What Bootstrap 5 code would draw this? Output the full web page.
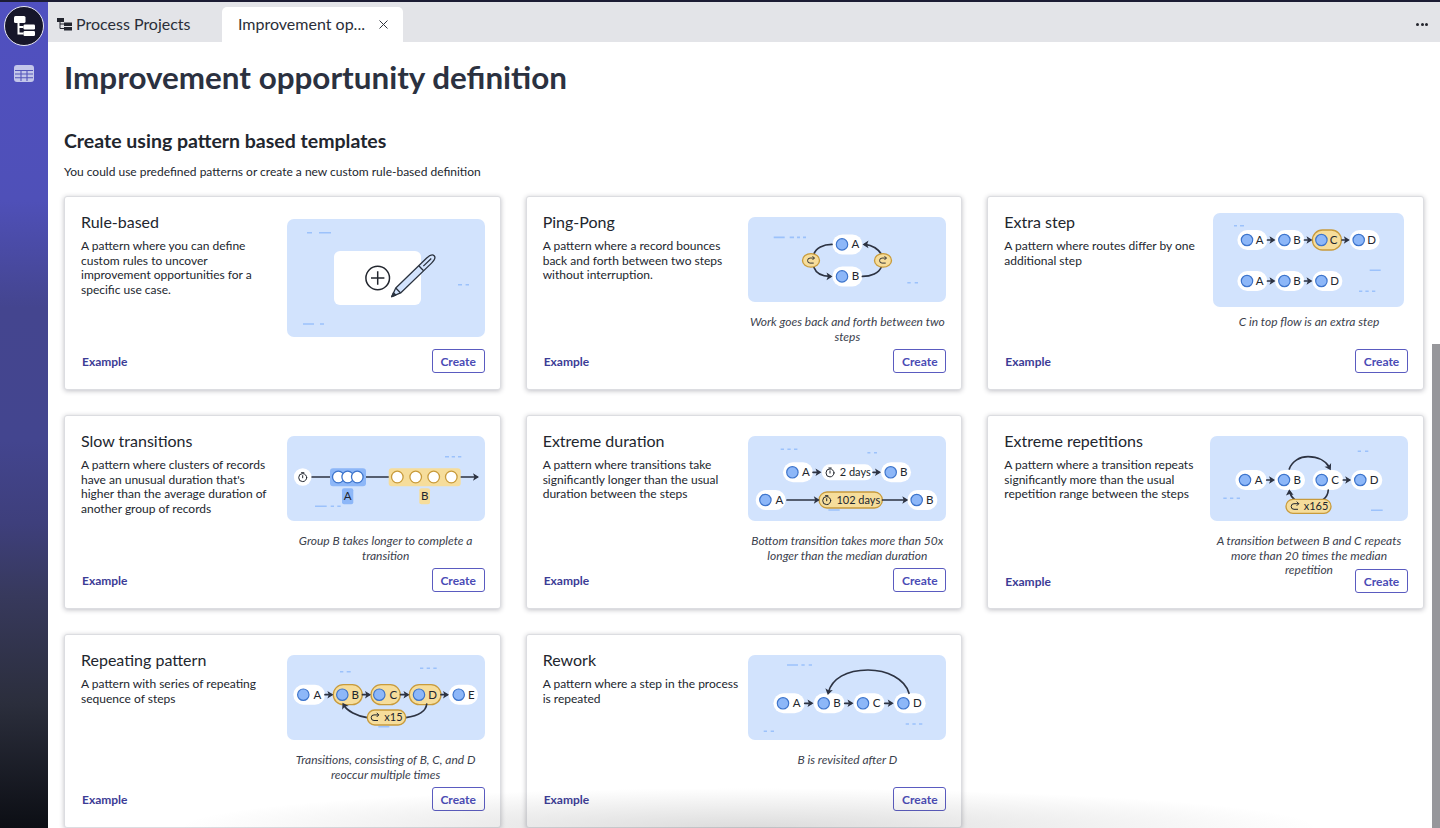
<!DOCTYPE html>
<html lang="en">
<head>
<meta charset="utf-8">
<title>Improvement opportunity definition</title>
<link href="https://cdn.jsdelivr.net/npm/bootstrap@5.3.0/dist/css/bootstrap.min.css" rel="stylesheet">
<style>
html,body{height:100%;overflow:hidden;}
body{font-family:"Lato","Liberation Sans",sans-serif;background:#fff;color:#22262e;}
.topline{height:2px;background:#1c1c34;}
.shell{height:826px;}
.rail{width:48px;flex:none;background:linear-gradient(180deg,#5050c0 0%,#4f50b8 24%,#44458f 37%,#43458f 53%,#3e3f7c 63%,#37395c 72%,#2b2e3c 85%,#0c0e14 100%);padding-top:4px;}
.logo{width:40px;height:40px;border-radius:50%;background:#16162a;border:1.5px solid #e8e8f4;}
.rail-icon{margin-top:19px;}
.tabbar{height:40px;background:#e3e4e8;padding-right:12px;}
.tab-a{font-size:16px;color:#2a2e38;padding:4px 0 0 9px;width:174px;gap:4px;}
.tab-b{font-size:16px;color:#2a2e38;background:#fff;width:181px;height:35px;margin-top:5px;border-radius:5px 5px 0 0;padding:0 15px 1px 16px;}
.dots{gap:1.5px;padding-top:4px;}
.dots i{display:block;width:3px;height:3px;border-radius:50%;background:#23242c;}
.page{padding:0 16px 0 16px;overflow:hidden;}
.page-title{font-size:31.4px;font-weight:700;color:#2b3140;margin:18px 0 0;line-height:34px;}
.sect-title{font-size:19.5px;font-weight:700;color:#22262e;margin:34px 0 0;line-height:26px;}
.sect-sub{font-size:12px;color:#22262e;margin:9px 0 0;line-height:18px;}
.tpl-grid{display:grid;grid-template-columns:repeat(3,1fr);grid-auto-rows:194px;gap:25px;margin-top:15px;}
.tpl{background:#fff;border:1px solid #dcdde1;border-radius:3px;box-shadow:0 1px 5px rgba(30,30,50,.28);padding:16px 15px 16px 16px;}
.tpl-main{flex:1 1 auto;min-height:0;gap:8px;}
.tpl-copy{flex:1 1 0;min-width:0;}
.tpl-name{font-size:16px;font-weight:400;color:#22262e;margin:-1px 0 0;line-height:20px;}
.tpl-desc{font-size:12px;line-height:14.5px;color:#22262e;margin:7px 0 0;}
.tpl-side{width:198px;flex:none;}
.pic{display:block;background:#d2e3fd;border-radius:7px;}
.w198{width:198px;height:85px;margin-top:4px;}
.tpl-first .pic{height:118px;margin-top:6px;}
.tpl-third .pic{width:191px;height:94px;margin:0 auto;}
.cap{font-size:12px;font-style:italic;line-height:14.5px;color:#3b414d;text-align:center;margin:13px 0 0;}
.cap-tight{margin-top:8px;}
.tpl-foot{margin-top:auto;padding-left:1px;}
.foot-low{margin-bottom:-1px;}
.ex-link{font-size:12px;font-weight:700;color:#3c3c96;text-decoration:none;margin-top:2px;}
.mk-btn{font-size:12px;font-weight:700;color:#4a4bb5;background:#fff;border:1.3px solid #5a5bc0;border-radius:3px;padding:0;width:53px;height:24px;line-height:21px;}
.scroll-thumb{position:absolute;right:0;top:342px;bottom:0;width:8px;background:#97979b;}
.fade-b{position:absolute;left:130px;right:120px;bottom:0;height:40px;pointer-events:none;background:radial-gradient(50% 100% at 50% 100%,rgba(60,60,60,.18),rgba(60,60,60,0) 100%);}
.dsh{stroke:#9cc2fb;stroke-width:1.6;fill:none;}
.lbl{font:400 11.5px "Lato","Liberation Sans",sans-serif;fill:#22262e;text-anchor:middle;}
.lbl-s{font:400 11px "Lato","Liberation Sans",sans-serif;fill:#22262e;}
.ln{stroke:#2d3342;stroke-width:1.7;fill:none;stroke-linecap:round;}
.ar{fill:#2d3342;}
.pw{fill:#fff;}
.py{fill:#f6dd9b;stroke:#c89b3c;stroke-width:1.3;}
.nd{fill:#8db7f8;stroke:#3e75cc;stroke-width:1.2;}
.ico{fill:none;stroke:#22262e;stroke-width:1;stroke-linecap:round;}
</style>
</head>
<body>
<svg width="0" height="0" class="position-absolute">
<defs>
<g id="timer"><circle cx="0" cy="0.6" r="4" class="ico"/><path d="M0 -1.4V0.8M-1.2 -4.3H1.2" class="ico"/></g>
<g id="redo"><path d="M3.4 -2.6 H-1 A2.8 2.8 0 0 0 -1 3 H2.6" class="ico"/><path d="M2 -4.4 L3.8 -2.6 L2 -0.8" class="ico"/></g>
<path id="ah" d="M-5 -3.8 L1 0 L-5 3.8 L-3.6 0 Z" class="ar"/>
</defs>
</svg>
<div class="topline"></div>
<div class="shell d-flex">
  <nav class="rail d-flex flex-column align-items-center">
    <div class="logo d-flex align-items-center justify-content-center">
      <svg width="21" height="20" viewBox="0 0 21 20"><rect x="0" y="0" width="11.500" height="7" rx="1.500" fill="#fff"/><rect x="9.500" y="8.500" width="11.500" height="5" rx="1.200" fill="#fff"/><rect x="9.500" y="15" width="11.500" height="5" rx="1.200" fill="#fff"/><path d="M4.500 7V17.500H9.500M4.500 11H9.500" stroke="#fff" stroke-width="2" fill="none"/></svg>
    </div>
    <svg class="rail-icon" width="20" height="17" viewBox="0 0 20 17"><rect width="20" height="17" rx="3" fill="#c3c6ea"/><path d="M1 5.500H19M1 9H19M1 12.700H19M7 5V16M13 5V16" stroke="#5456ba" stroke-width="1.100"/></svg>
  </nav>
  <div class="flex-grow-1 d-flex flex-column min-w-0 position-relative">
    <header class="tabbar d-flex flex-none align-items-stretch">
      <div class="tab-a d-flex align-items-center">
        <svg width="15" height="14" viewBox="0 0 15 14"><rect x="0" y="1" width="7" height="4" fill="#23252e"/><rect x="7" y="5.500" width="8" height="3.500" fill="#23252e"/><rect x="7" y="10" width="8" height="3.500" fill="#23252e"/><path d="M3 5V11.500H7M3 7H7" stroke="#23252e" fill="none"/></svg>
        <span>Process Projects</span>
      </div>
      <div class="tab-b d-flex align-items-center justify-content-between">
        <span>Improvement op...</span>
        <svg width="9" height="9" viewBox="0 0 9 9"><path d="M.5.500L8.500 8.500M8.500.500L.5 8.500" stroke="#33363f" stroke-width="1"/></svg>
      </div>
      <div class="dots d-flex align-items-center ms-auto"><i></i><i></i><i></i></div>
    </header>
    <main class="page flex-grow-1">
      <h1 class="page-title">Improvement opportunity definition</h1>
      <h2 class="sect-title">Create using pattern based templates</h2>
      <p class="sect-sub">You could use predefined patterns or create a new custom rule-based definition</p>
      <div class="tpl-grid">

        <section class="tpl tpl-first d-flex flex-column">
          <div class="tpl-main d-flex">
            <div class="tpl-copy"><h3 class="tpl-name">Rule-based</h3><p class="tpl-desc">A pattern where you can define custom rules to uncover improvement opportunities for a specific use case.</p></div>
            <div class="tpl-side">
              <svg class="pic" viewBox="0 0 198 118" width="198" height="118">
                <path class="dsh" d="M20 13.700H25M32 13.700H44M171 65.700H175M178.600 65.700H182M16 105H27M33 105H37"/>
                <rect x="47" y="32" width="87" height="54" rx="6" fill="#fff"/>
                <circle cx="90.700" cy="59" r="11.800" fill="none" stroke="#22262e" stroke-width="1.500"/>
                <path d="M84 59H97.400M90.700 52.300V65.700" stroke="#22262e" stroke-width="1.500"/>
                <g transform="translate(104.700 77.700) rotate(-44)" stroke="#2b333f" stroke-width="1.300" stroke-linejoin="round">
                  <path d="M0 0 L9 -3.500 H52 Q59 -3.500 59 0 Q59 3.500 52 3.500 H9 Z" fill="#d2e3fd"/>
                  <path d="M9 -3.500V3.500M41 -3.500V3.500M44 0H55" fill="none"/>
                  <path d="M0 0 L4 -1.600 V1.600 Z" fill="#2b333f"/>
                </g>
              </svg>
            </div>
          </div>
          <div class="tpl-foot d-flex justify-content-between align-items-center"><a class="ex-link" href="#">Example</a><button class="mk-btn btn" type="button">Create</button></div>
        </section>

        <section class="tpl d-flex flex-column">
          <div class="tpl-main d-flex">
            <div class="tpl-copy"><h3 class="tpl-name">Ping-Pong</h3><p class="tpl-desc">A pattern where a record bounces back and forth between two steps without interruption.</p></div>
            <div class="tpl-side">
              <svg class="pic w198" viewBox="0 0 198 85">
                <path class="dsh" d="M25.700 20.400H36.700M41.700 20.400H46M49 20.400H52M55 20.400H58M159.300 65.700H162.700M166.700 65.700H170"/>
                <rect x="84.400" y="17.400" width="30" height="20" rx="10" class="pw"/><rect x="84.400" y="49.400" width="30" height="20" rx="10" class="pw"/>
                <circle cx="94" cy="27.400" r="5.700" class="nd"/><text x="107.400" y="31.400" class="lbl">A</text>
                <circle cx="94" cy="59.400" r="5.700" class="nd"/><text x="107.400" y="63.400" class="lbl">B</text>
                <path class="ln" d="M84 27.400C75 27.400 68 31 66 37M65.700 50C68 56 74 59.400 82 59.400M114.400 59.400C123 59.400 131 56 133.300 50M133.300 37C130 32 125 28.500 117 27.400"/>
                <use href="#ah" transform="translate(83.500 59.400)"/><use href="#ah" transform="translate(115.500 27.400) rotate(180)"/>
                <ellipse cx="63" cy="43.400" rx="8.500" ry="6.800" class="py"/><ellipse cx="135" cy="43.400" rx="8.500" ry="6.800" class="py"/>
                <use href="#redo" transform="translate(63 43.400) scale(.9)"/><use href="#redo" transform="translate(135 43.400) scale(.9)"/>
              </svg>
              <p class="cap">Work goes back and forth between two steps</p>
            </div>
          </div>
          <div class="tpl-foot d-flex justify-content-between align-items-center"><a class="ex-link" href="#">Example</a><button class="mk-btn btn" type="button">Create</button></div>
        </section>

        <section class="tpl tpl-third d-flex flex-column">
          <div class="tpl-main d-flex">
            <div class="tpl-copy"><h3 class="tpl-name">Extra step</h3><p class="tpl-desc">A pattern where routes differ by one additional step</p></div>
            <div class="tpl-side">
              <svg class="pic" viewBox="0 0 191 94">
                <path class="dsh" d="M21 12.700H24M27 12.700H31M156.700 57.300H167.700M146 78.300H149.300M152.400 78.300H155.700M159 78.300H162.300"/>
                <rect x="24.400" y="17" width="30" height="20" rx="10" class="pw"/><rect x="62" y="17" width="29.400" height="20" rx="10" class="pw"/><rect x="99.400" y="17" width="29" height="20" rx="10" class="py"/><rect x="136.700" y="17" width="30" height="20" rx="10" class="pw"/>
                <rect x="24.400" y="58" width="30" height="20" rx="10" class="pw"/><rect x="62" y="58" width="29.400" height="20" rx="10" class="pw"/><rect x="99.400" y="58" width="30" height="20" rx="10" class="pw"/>
                <circle cx="34" cy="27" r="5.700" class="nd"/><text x="46.700" y="31" class="lbl">A</text>
                <circle cx="71.400" cy="27" r="5.700" class="nd"/><text x="84" y="31" class="lbl">B</text>
                <circle cx="108.400" cy="27" r="5.700" class="nd"/><text x="120.700" y="31" class="lbl">C</text>
                <circle cx="145.700" cy="27" r="5.700" class="nd"/><text x="158.700" y="31" class="lbl">D</text>
                <circle cx="34" cy="68" r="5.700" class="nd"/><text x="46.700" y="72" class="lbl">A</text>
                <circle cx="71.400" cy="68" r="5.700" class="nd"/><text x="84" y="72" class="lbl">B</text>
                <circle cx="108.400" cy="68" r="5.700" class="nd"/><text x="121.500" y="72" class="lbl">D</text>
                <path class="ln" d="M54.500 27H60M91.500 27H97M129 27H134.500M54.500 68H60M91.500 68H97"/>
                <use href="#ah" transform="translate(61.500 27)"/><use href="#ah" transform="translate(98.500 27)"/><use href="#ah" transform="translate(135.800 27)"/><use href="#ah" transform="translate(61.500 68)"/><use href="#ah" transform="translate(98.500 68)"/>
              </svg>
              <p class="cap cap-tight">C in top flow is an extra step</p>
            </div>
          </div>
          <div class="tpl-foot d-flex justify-content-between align-items-center"><a class="ex-link" href="#">Example</a><button class="mk-btn btn" type="button">Create</button></div>
        </section>

        <section class="tpl d-flex flex-column">
          <div class="tpl-main d-flex">
            <div class="tpl-copy"><h3 class="tpl-name">Slow transitions</h3><p class="tpl-desc">A pattern where clusters of records have an unusual duration that's higher than the average duration of another group of records</p></div>
            <div class="tpl-side">
              <svg class="pic w198" viewBox="0 0 198 85">
                <path class="dsh" d="M158 20.700H162M164.700 20.700H168M171 20.700H174.300M28 70.300H39.700M43.700 70.300H47M50.300 70.300H53.700"/>
                <path class="ln" d="M24 41H43M79 41H102M173 41H190"/><use href="#ah" transform="translate(191 41)"/>
                <circle cx="15.700" cy="41" r="8.800" fill="#fff"/><use href="#timer" transform="translate(15.700 41)"/>
                <rect x="43" y="32.300" width="36" height="18" rx="3" fill="#8db7f8"/>
                <rect x="101.700" y="32.300" width="72" height="18" rx="3" fill="#f6dd9b"/>
                <g fill="#fff" stroke="#3e75cc" stroke-width="1.300"><circle cx="51.300" cy="41" r="5.800"/><circle cx="60.700" cy="41" r="5.800"/><circle cx="70.300" cy="41" r="5.800"/></g>
                <g fill="#fff" stroke="#c89b3c" stroke-width="1.300"><circle cx="110.300" cy="41" r="5.800"/><circle cx="128.700" cy="41" r="5.800"/><circle cx="146.700" cy="41" r="5.800"/><circle cx="164.300" cy="41" r="5.800"/></g>
                <rect x="55" y="52.300" width="11.300" height="16" rx="2" fill="#8db7f8"/><rect x="132.300" y="52.300" width="10.700" height="16" rx="2" fill="#f6dd9b"/>
                <text x="60.600" y="64.400" class="lbl">A</text><text x="137.600" y="64.400" class="lbl">B</text>
              </svg>
              <p class="cap">Group B takes longer to complete a transition</p>
            </div>
          </div>
          <div class="tpl-foot d-flex justify-content-between align-items-center"><a class="ex-link" href="#">Example</a><button class="mk-btn btn" type="button">Create</button></div>
        </section>

        <section class="tpl d-flex flex-column">
          <div class="tpl-main d-flex">
            <div class="tpl-copy"><h3 class="tpl-name">Extreme duration</h3><p class="tpl-desc">A pattern where transitions take significantly longer than the usual duration between the steps</p></div>
            <div class="tpl-side">
              <svg class="pic w198" viewBox="0 0 198 85">
                <path class="dsh" d="M32.700 13.300H36M39.400 13.300H42.700M46 13.300H49.400M119.400 16.700H122.400M126 16.700H129M80.400 74H91.700"/>
                <rect x="35" y="26.300" width="30" height="20" rx="10" class="pw"/><rect x="73.700" y="28.300" width="51.300" height="16" rx="8" class="pw"/><rect x="133" y="26.300" width="30" height="20" rx="10" class="pw"/>
                <rect x="7.700" y="54" width="30" height="20" rx="10" class="pw"/><rect x="71" y="56" width="63.400" height="16" rx="8" class="py"/><rect x="159.400" y="54" width="30" height="20" rx="10" class="pw"/>
                <circle cx="44.400" cy="36.300" r="5.700" class="nd"/><text x="58" y="40.300" class="lbl">A</text>
                <circle cx="142.700" cy="36.300" r="5.700" class="nd"/><text x="155.700" y="40.300" class="lbl">B</text>
                <use href="#timer" transform="translate(82 36.300)"/><text x="91.700" y="40.100" class="lbl-s">2 days</text>
                <circle cx="17.400" cy="64" r="5.700" class="nd"/><text x="31.400" y="68" class="lbl">A</text>
                <circle cx="168.700" cy="64" r="5.700" class="nd"/><text x="181.700" y="68" class="lbl">B</text>
                <use href="#timer" transform="translate(78.700 64)"/><text x="88.400" y="67.800" class="lbl-s">102 days</text>
                <path class="ln" d="M65 36.300H71M125 36.300H131M39 64H69.500M134.500 64H158"/>
                <use href="#ah" transform="translate(72.500 36.300)"/><use href="#ah" transform="translate(132 36.300)"/><use href="#ah" transform="translate(70.800 64)"/><use href="#ah" transform="translate(159.300 64)"/>
              </svg>
              <p class="cap">Bottom transition takes more than 50x longer than the median duration</p>
            </div>
          </div>
          <div class="tpl-foot d-flex justify-content-between align-items-center"><a class="ex-link" href="#">Example</a><button class="mk-btn btn" type="button">Create</button></div>
        </section>

        <section class="tpl d-flex flex-column">
          <div class="tpl-main d-flex">
            <div class="tpl-copy"><h3 class="tpl-name">Extreme repetitions</h3><p class="tpl-desc">A pattern where a transition repeats significantly more than the usual repetition range between the steps</p></div>
            <div class="tpl-side">
              <svg class="pic w198" viewBox="0 0 198 85">
                <path class="dsh" d="M147.700 15.300H151M155 15.300H158.300M13.300 62.300H16.700M20 62.300H23.300M26.700 62.300H30M161 74.300H172.700"/>
                <rect x="25.300" y="34" width="31.400" height="20" rx="10" class="pw"/><rect x="64.700" y="34" width="30.300" height="20" rx="10" class="pw"/><rect x="102.700" y="34" width="30.600" height="20" rx="10" class="pw"/><rect x="141" y="34" width="31.300" height="20" rx="10" class="pw"/>
                <circle cx="35" cy="44" r="5.700" class="nd"/><text x="48.700" y="48" class="lbl">A</text>
                <circle cx="74" cy="44" r="5.700" class="nd"/><text x="87.300" y="48" class="lbl">B</text>
                <circle cx="111.700" cy="44" r="5.700" class="nd"/><text x="125" y="48" class="lbl">C</text>
                <circle cx="150.300" cy="44" r="5.700" class="nd"/><text x="164" y="48" class="lbl">D</text>
                <path class="ln" d="M56.700 44H62.500M133.300 44H139M79.300 33C82 25 90 20.700 98 20.700C108 20.700 116 25 119.500 31.500M80 56C80.500 59 82 61.500 84.500 63.500M113.300 63.500C116 61.500 118 58 118.300 54"/>
                <use href="#ah" transform="translate(64 44)"/><use href="#ah" transform="translate(140.200 44)"/><use href="#ah" transform="translate(120.300 33.300) rotate(60)"/><use href="#ah" transform="translate(79.300 54.300) rotate(-95)"/>
                <rect x="76" y="63.300" width="45" height="14" rx="7" class="py"/>
                <use href="#redo" transform="translate(85 70.300)"/><text x="93.700" y="74.200" class="lbl-s">x165</text>
              </svg>
              <p class="cap">A transition between B and C repeats more than 20 times the median repetition</p>
            </div>
          </div>
          <div class="tpl-foot foot-low d-flex justify-content-between align-items-center"><a class="ex-link" href="#">Example</a><button class="mk-btn btn" type="button">Create</button></div>
        </section>

        <section class="tpl d-flex flex-column">
          <div class="tpl-main d-flex">
            <div class="tpl-copy"><h3 class="tpl-name">Repeating pattern</h3><p class="tpl-desc">A pattern with series of repeating sequence of steps</p></div>
            <div class="tpl-side">
              <svg class="pic w198" viewBox="0 0 198 85">
                <path class="dsh" d="M53 16.700H56.300M59.700 16.700H63.700M133 13.300H136.300M139.700 13.300H143M146.300 13.300H149.700M91.300 71.700H102.300"/>
                <rect x="6.300" y="29.700" width="31.700" height="20" rx="10" class="pw"/><rect x="46.300" y="29.700" width="29" height="20" rx="10" class="py"/><rect x="84" y="29.700" width="29.300" height="20" rx="10" class="py"/><rect x="122.300" y="29.700" width="31.700" height="20" rx="10" class="py"/><rect x="161.700" y="29.700" width="29.300" height="20" rx="10" class="pw"/>
                <circle cx="16.300" cy="39.700" r="5.700" class="nd"/><text x="30.300" y="43.700" class="lbl">A</text>
                <circle cx="55.300" cy="39.700" r="5.700" class="nd"/><text x="68.300" y="43.700" class="lbl">B</text>
                <circle cx="92.300" cy="39.700" r="5.700" class="nd"/><text x="106.300" y="43.700" class="lbl">C</text>
                <circle cx="132" cy="39.700" r="5.700" class="nd"/><text x="145.700" y="43.700" class="lbl">D</text>
                <circle cx="171.700" cy="39.700" r="5.700" class="nd"/><text x="184.300" y="43.700" class="lbl">E</text>
                <path class="ln" d="M38 39.700H44.500M75.500 39.700H82M113.500 39.700H120.500M154 39.700H160M80.300 62.700C70 61 60 56 56.800 50M118.700 62.700C130 61 139 57 139.700 49"/>
                <use href="#ah" transform="translate(45.400 39.700)"/><use href="#ah" transform="translate(83 39.700)"/><use href="#ah" transform="translate(121.500 39.700)"/><use href="#ah" transform="translate(161 39.700)"/><use href="#ah" transform="translate(56 48.500) rotate(-120)"/>
                <rect x="80.300" y="55" width="38.400" height="15" rx="7.500" class="py"/>
                <use href="#redo" transform="translate(88 62.500)"/><text x="97.300" y="66.400" class="lbl-s">x15</text>
              </svg>
              <p class="cap">Transitions, consisting of B, C, and D reoccur multiple times</p>
            </div>
          </div>
          <div class="tpl-foot d-flex justify-content-between align-items-center"><a class="ex-link" href="#">Example</a><button class="mk-btn btn" type="button">Create</button></div>
        </section>

        <section class="tpl d-flex flex-column">
          <div class="tpl-main d-flex">
            <div class="tpl-copy"><h3 class="tpl-name">Rework</h3><p class="tpl-desc">A pattern where a step in the process is repeated</p></div>
            <div class="tpl-side">
              <svg class="pic w198" viewBox="0 0 198 85">
                <path class="dsh" d="M39 10H50M53.400 10H56.700M60.700 10H64M157.700 69H161M164.400 69H167.700M171 69H174.300M15.700 76.300H19M22.700 76.300H26"/>
                <rect x="25.400" y="38.300" width="31.300" height="20" rx="10" class="pw"/><rect x="65.700" y="38.300" width="31" height="20" rx="10" class="pw"/><rect x="105.700" y="38.300" width="31" height="20" rx="10" class="pw"/><rect x="146" y="38.300" width="31.700" height="20" rx="10" class="pw"/>
                <circle cx="35" cy="48.300" r="5.700" class="nd"/><text x="48.700" y="52.300" class="lbl">A</text>
                <circle cx="75.700" cy="48.300" r="5.700" class="nd"/><text x="89" y="52.300" class="lbl">B</text>
                <circle cx="115" cy="48.300" r="5.700" class="nd"/><text x="128.700" y="52.300" class="lbl">C</text>
                <circle cx="155.400" cy="48.300" r="5.700" class="nd"/><text x="169.400" y="52.300" class="lbl">D</text>
                <path class="ln" d="M56.700 48.300H63.500M96.700 48.300H103.500M136.700 48.300H143.500M161 38.300C157 24 139 15 120 15C98 15 84 24 80.500 37"/>
                <use href="#ah" transform="translate(64.500 48.300)"/><use href="#ah" transform="translate(104.500 48.300)"/><use href="#ah" transform="translate(144.700 48.300)"/><use href="#ah" transform="translate(80 39) rotate(102)"/>
              </svg>
              <p class="cap">B is revisited after D</p>
            </div>
          </div>
          <div class="tpl-foot d-flex justify-content-between align-items-center"><a class="ex-link" href="#">Example</a><button class="mk-btn btn" type="button">Create</button></div>
        </section>

      </div>
    </main>
    <div class="scroll-thumb"></div>
    <div class="fade-b"></div>
  </div>
</div>
<script src="https://cdn.jsdelivr.net/npm/bootstrap@5.3.0/dist/js/bootstrap.bundle.min.js"></script>
</body>
</html>
